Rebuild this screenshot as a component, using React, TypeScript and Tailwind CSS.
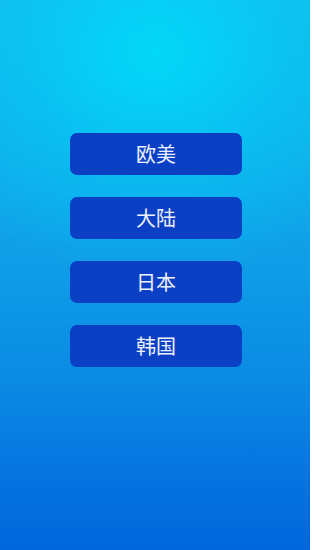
import React from "react";

export default function App() {
  const items = ["欧美", "大陆", "日本", "韩国"];
  return (
    <div
      className="w-[310px] h-[550px] overflow-hidden flex flex-col items-center pt-[133px] gap-[22px] bg-[radial-gradient(ellipse_85%_40%_at_50%_10%,rgba(0,220,250,0.9)_0%,rgba(0,210,248,0.45)_50%,rgba(0,200,245,0)_100%),linear-gradient(to_bottom,#16b8ec_0%,#12aeeb_25%,#0fa0e8_45%,#0a8ae4_70%,#0676e0_85%,#0066dc_100%)]"
      style={{ fontFamily: '"Noto Sans CJK SC", "Noto Sans", sans-serif' }}
    >
      {items.map((t) => (
        <button
          key={t}
          className="w-[172px] h-[42px] ml-[2px] rounded-[7px] bg-[#0b40c5] text-[#eef2ff] text-[20px] font-normal leading-none flex items-center justify-center"
        >
          {t}
        </button>
      ))}
    </div>
  );
}
